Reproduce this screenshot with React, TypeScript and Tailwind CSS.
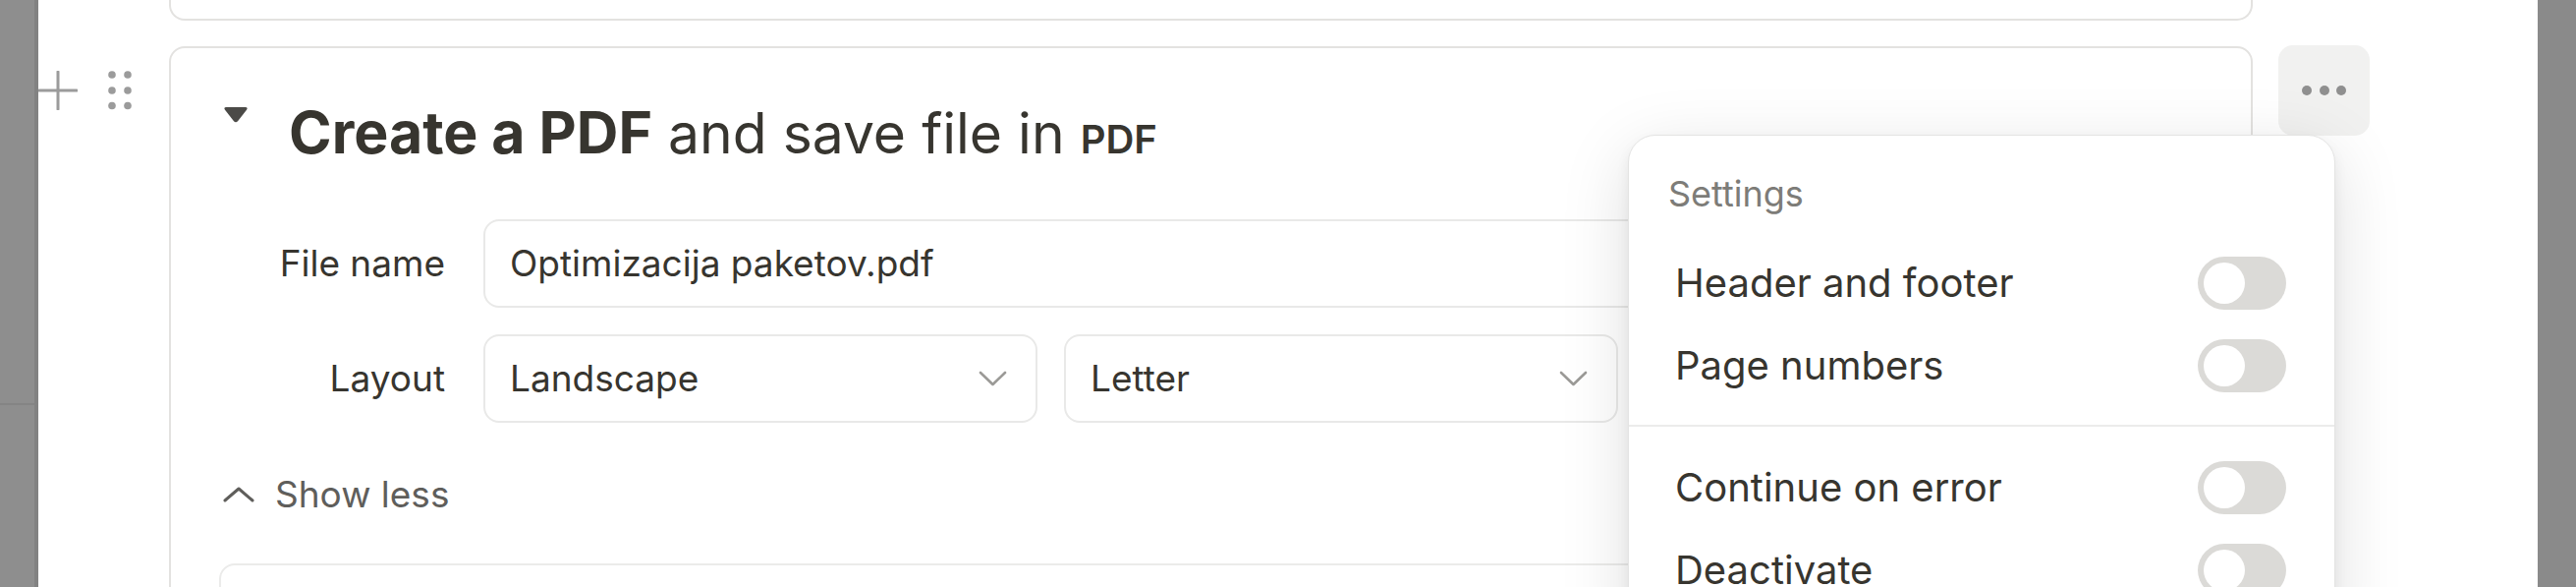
import type { ReactNode } from 'react'

const font = { fontFamily: 'Inter, "Noto Sans", sans-serif' }

function Toggle() {
  return (
    <div className="flex h-[54px] w-[90px] shrink-0 items-center rounded-full bg-[#dbdad7] pl-[6px]">
      <div className="h-[42px] w-[42px] rounded-full bg-white" />
    </div>
  )
}

function MenuItem({ label }: { label: string }) {
  return (
    <div className="flex h-[84px] items-center justify-between pl-[7px] pr-[9px]">
      <span className="text-[40px] text-[#37352f]">{label}</span>
      <Toggle />
    </div>
  )
}

function Select({ value }: { value?: string }) {
  return (
    <div className="flex h-[90px] items-center justify-between rounded-[16px] border-2 border-[#e9e9e8] pl-[25px] pr-[29px]">
      <span className="text-[37px] text-[#37352f]">{value}</span>
      <svg width="29" height="16" viewBox="0 0 29 16" fill="none">
        <path d="M2 2 L14.5 14 L27 2" stroke="#9b9a97" strokeWidth="2.6" strokeLinecap="round" strokeLinejoin="round" />
      </svg>
    </div>
  )
}

function Row({ label, children }: { label: string; children: ReactNode }) {
  return (
    <div className="flex items-center gap-[39px]">
      <div className="w-[226px] shrink-0 text-right text-[37px] text-[#37352f]">{label}</div>
      <div className="flex-1">{children}</div>
    </div>
  )
}

export default function App() {
  return (
    <div className="flex h-[597px] w-[2622px] overflow-hidden bg-[#8c8c8c]" style={font}>
      {/* dimmed sidebar */}
      <div className="relative w-[39px] shrink-0 bg-[#8e8e8e]">
        <div className="absolute left-0 right-0 top-[410px] h-[2px] bg-[#848484]" />
        <div className="absolute bottom-0 right-0 top-0 w-[4px] bg-[#828282]" />
      </div>

      <main className="relative flex-1 overflow-hidden bg-white">
        {/* previous block */}
        <div className="ml-[133px] h-[21px] w-[2121px] rounded-b-[16px] border-2 border-t-0 border-[#e3e2e0]" />

        <div className="mt-[26px] flex items-start">
          {/* gutter */}
          <div className="flex w-[133px] shrink-0 items-start gap-[27px] pt-[25px]">
            <svg width="40" height="40" viewBox="0 0 40 40" fill="none">
              <path d="M1 20 H39 M20 1 V39" stroke="#9b9b9b" strokeWidth="3" strokeLinecap="round" />
            </svg>
            <svg width="32" height="40" viewBox="0 0 32 40" fill="#9b9b9b">
              <circle cx="8" cy="4" r="3.8" />
              <circle cx="24" cy="4" r="3.8" />
              <circle cx="8" cy="20" r="3.8" />
              <circle cx="24" cy="20" r="3.8" />
              <circle cx="8" cy="35.5" r="3.8" />
              <circle cx="24" cy="35.5" r="3.8" />
            </svg>
          </div>

          {/* block card */}
          <div className="h-[700px] w-[2121px] shrink-0 rounded-[16px] border-2 border-[#e3e2e0] px-[53px] pt-[51px]">
            <div className="flex items-start gap-[41px]">
              <svg className="mt-[8px] shrink-0" width="26" height="17" viewBox="0 0 26 17" fill="#4b4a47">
                <path d="M3.5 1 H22.5 Q26 1 23.8 4 L15.2 15 Q13 17.4 10.8 15 L2.2 4 Q0 1 3.5 1 Z" />
              </svg>
              <h1 className="text-[57px] leading-[70px] text-[#37352f]">
                <span className="text-[59px] font-bold">Create a PDF</span>
                <span> and save file in </span>
                <span className="text-[40px] font-semibold">PDF</span>
              </h1>
            </div>

            <div className="mt-[46px] flex flex-col gap-[27px]">
              <Row label="File name">
                <div className="flex h-[90px] items-center rounded-[16px] border-2 border-[#e9e9e8] px-[25px] text-[37px] text-[#37352f]">
                  Optimizacija paketov.pdf
                </div>
              </Row>
              <Row label="Layout">
                <div className="grid grid-cols-3 gap-[27px]">
                  <Select value="Landscape" />
                  <Select value="Letter" />
                  <Select />
                </div>
              </Row>
            </div>

            <div className="mt-[51px] flex h-[44px] items-center gap-[21px] text-[37px] text-[#5f5e5b]">
              <svg width="32" height="16" viewBox="0 0 32 16" fill="none">
                <path d="M2 14 L16 2 L30 14" stroke="#5f5e5b" strokeWidth="3" strokeLinecap="round" strokeLinejoin="round" />
              </svg>
              <span>Show less</span>
            </div>

            <div className="-ml-[4px] mt-[48px] h-[200px] rounded-[16px] border-2 border-[#ebebea]" />
          </div>

          {/* more button */}
          <button
            type="button"
            className="-mt-[1px] ml-[26px] flex h-[92px] w-[93px] shrink-0 items-center justify-center gap-[7.5px] rounded-[15px] bg-[#f1f1f0]"
          >
            <span className="h-[10px] w-[10px] rounded-full bg-[#8f8f8f]" />
            <span className="h-[10px] w-[10px] rounded-full bg-[#8f8f8f]" />
            <span className="h-[10px] w-[10px] rounded-full bg-[#8f8f8f]" />
          </button>
        </div>

        {/* settings menu */}
        <div className="absolute left-[1618px] top-[137px] h-[520px] w-[720px] rounded-[28px] border border-[#e4e4e3] bg-white shadow-[0_6px_14px_rgba(0,0,0,0.06),0_18px_70px_rgba(0,0,0,0.13)]">
          <div className="px-[40px] pt-[35px] pb-[18px]">
            <div className="h-[48px] text-[36px] leading-[48px] text-[#7d7c78]">Settings</div>
            <div className="mt-[25px]">
              <MenuItem label="Header and footer" />
              <MenuItem label="Page numbers" />
            </div>
          </div>
          <div className="h-[2px] bg-[#ececeb]" />
          <div className="px-[40px] pt-[20px]">
            <MenuItem label="Continue on error" />
            <MenuItem label="Deactivate" />
          </div>
        </div>
      </main>

      <div className="w-[39px] shrink-0 bg-[#8a8a8a]" />
    </div>
  )
}
